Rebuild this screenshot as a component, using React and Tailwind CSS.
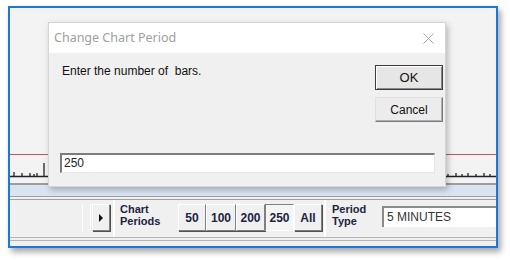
import React from 'react';

const sans = { fontFamily: '"Liberation Sans", Arial, sans-serif' };

function ToolButton({ label, pressed, className = '' }) {
  return (
    <div
      className={`h-[27px] shrink-0 flex items-center justify-center text-[12px] font-bold text-[#1c2440] border ${
        pressed
          ? 'bg-[#f4f4f4] border-t-[#808080] border-l-[#808080] border-r-white border-b-white'
          : 'bg-[#f0f0f0] border-t-white border-l-white border-r-[#808080] border-b-[#808080] shadow-[1px_1px_0_#505050]'
      } ${className}`}
    >
      {label}
    </div>
  );
}

export default function App() {
  return (
    <div className="w-[510px] h-[261px] bg-white pl-[8px] pt-[6px]" style={sans}>
      <div className="relative w-[490px] h-[242px] border-2 border-[#1c78d6] bg-[#f0f0f0] flex flex-col overflow-hidden shadow-[3px_4px_6px_rgba(0,0,0,0.35)]">
        {/* chart */}
        <div className="relative h-[177px] shrink-0 bg-[#f3f3f3] border-b-2 border-[#9c9c9c]">
          <svg className="absolute left-0 top-0" width="486" height="175">
            <line x1="0" y1="146.5" x2="486" y2="146.5" stroke="#b85a5a" strokeWidth="1.2" />
            <path
              d="M0 168.5 H486 M4 168.5 V164 M12 168.5 V165 M20 168.5 V165 M24 168.5 V166 M27 168.5 V165 M34 168.5 V155 M438 168.5 V166 M446 168.5 V165 M452 168.5 V166 M458 168.5 V165 M466 168.5 V166 M474 168.5 V165 M480 168.5 V166"
              stroke="#222"
              strokeWidth="1.3"
              fill="none"
            />
          </svg>
        </div>
        <div className="h-[11px] shrink-0 bg-[#d9e4f2]" />
        <div className="h-[4px] shrink-0 border-y border-[#a0a0a0]" />

        {/* toolbar */}
        <div className="h-[37px] shrink-0 flex items-start pl-[72px]">
          <div className="mt-[4px] w-[9px] h-[27px] shrink-0 border-l border-white border-r border-[#808080]" />
          <div className="mt-[4px] ml-[1px] w-[18px] h-[27px] shrink-0 flex items-center justify-center border border-t-white border-l-white border-r-[#808080] border-b-[#808080] shadow-[1px_1px_0_#505050]">
            <svg width="5" height="8">
              <path d="M0 0 L4 4 L0 8 Z" fill="#111" />
            </svg>
          </div>
          <div className="ml-[3px] w-[2px] h-[37px] shrink-0 border-l border-[#a0a0a0] border-r border-white" />
          <div className="ml-[5px] mt-[3px] w-[58px] shrink-0 text-[11px] font-bold leading-[12px] text-[#1c2440]">
            Chart
            <br />
            Periods
          </div>
          <div className="mt-[4px] flex shrink-0">
            <ToolButton label="50" className="w-[28px]" />
            <ToolButton label="100" className="w-[30px]" />
            <ToolButton label="200" className="w-[29px]" />
            <ToolButton label="250" pressed className="w-[29px]" />
            <ToolButton label="All" className="w-[28px]" />
          </div>
          <div className="ml-[2px] w-[2px] h-[37px] shrink-0 border-l border-[#a0a0a0] border-r border-white" />
          <div className="ml-[6px] mt-[3px] w-[50px] shrink-0 text-[11px] font-bold leading-[12px] text-[#1c2440]">
            Period
            <br />
            Type
          </div>
          <div className="mt-[6px] w-[120px] h-[21px] shrink-0 bg-white border-t-2 border-l-2 border-[#8a8a8a] pl-[3px] text-[12px] leading-[18px] text-[#333]">
            5 MINUTES
          </div>
        </div>
        <div className="h-[4px] shrink-0 border-y border-[#b4b4b4]" />

        {/* dialog */}
        <div className="absolute left-[38px] top-[14px] w-[398px] h-[165px] flex flex-col bg-[#f0f0f0] border border-[#d4d4d4] shadow-[2px_3px_6px_rgba(0,0,0,0.25)]">
          <div className="relative h-[30px] shrink-0 bg-white flex items-center pl-[5px]">
            <span className="text-[12.5px] text-[#a0a0a0]" style={{ fontFamily: '"Noto Sans", "Open Sans", sans-serif' }}>
              Change Chart Period
            </span>
            <svg className="absolute left-[374px] top-[10px]" width="11" height="11">
              <path d="M0.5 0.5 L10.5 10.5 M10.5 0.5 L0.5 10.5" stroke="#a8a8a8" strokeWidth="1" />
            </svg>
          </div>
          <div className="flex-1 flex flex-col">
            <div className="flex items-start">
              <div className="pl-[13px] pt-[11px] text-[12px] leading-[14px] text-[#111] whitespace-pre">
                Enter the number of  bars.
              </div>
              <div className="ml-auto mr-[2px] mt-[12px] flex flex-col gap-[7px]">
                <div className="w-[68px] h-[25px] flex items-center justify-center border border-[#3c3c3c] bg-[#e6e6e6] text-[13px] text-[#111] shadow-[inset_1px_1px_0_#fff,inset_-1px_-1px_0_#8a8a8a]">
                  OK
                </div>
                <div className="w-[68px] h-[25px] flex items-center justify-center border border-t-[#e0e0e0] border-l-[#e0e0e0] border-r-[#7a7a7a] border-b-[#7a7a7a] bg-[#ececec] text-[12px] text-[#111] shadow-[inset_-1px_-1px_0_#b0b0b0]">
                  Cancel
                </div>
              </div>
            </div>
            <div className="mt-auto mb-[13px] ml-[11px] w-[375px] h-[20px] bg-white border-t-2 border-l-2 border-[#7c7c7c] border-r border-b border-r-[#e6e6e6] border-b-[#e6e6e6] pl-[2px] text-[12px] leading-[16px] text-[#222]">
              250
            </div>
          </div>
        </div>
      </div>
    </div>
  );
}
